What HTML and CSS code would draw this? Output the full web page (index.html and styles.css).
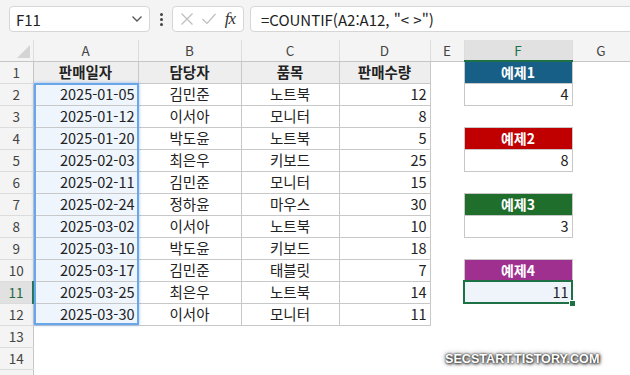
FILE: index.html
```html
<!DOCTYPE html>
<html lang="ko">
<head>
    <meta charset="UTF-8">
    <title>COUNTIF 예제</title>
    <link rel="stylesheet" href="styles.css">
</head>
<body>

    <div class="topbar">
        <div class="namebox">
            <span>F11</span>
            <svg width="12" height="8" viewBox="0 0 12 8"><path d="M1.5 1.5 L6 6 L10.5 1.5" fill="none" stroke="#555" stroke-width="1.3"/></svg>
        </div>
        <div class="dots"><i></i><i></i><i></i></div>
        <div class="fxbox">
            <svg width="14" height="14" viewBox="0 0 14 14"><path d="M1.5 1.5 L12.5 12.5 M12.5 1.5 L1.5 12.5" stroke="#bdbdbd" stroke-width="1.2"/></svg>
            <svg width="16" height="14" viewBox="0 0 16 14"><path d="M1.5 7 L6 11.5 L14.5 2" fill="none" stroke="#bdbdbd" stroke-width="1.2"/></svg>
            <span class="fx">fx</span>
        </div>
        <div class="formula">=COUNTIF(A2:A12, "&lt; &gt;")</div>
    </div>

    <div class="sheet">
        <table class="grid">
            <colgroup>
                <col style="width:33px"><col style="width:105px"><col style="width:103px"><col style="width:98px">
                <col style="width:91px"><col style="width:34px"><col style="width:108px"><col style="width:58px">
            </colgroup>
            <tr class="colrow">
                <th class="corner"><span class="tri"></span></th>
                <th>A</th><th>B</th><th>C</th><th>D</th><th>E</th><th class="on">F</th><th>G</th>
            </tr>
            <tr>
                <th class="rh">1</th>
                <td class="b head">판매일자</td><td class="b head">담당자</td><td class="b head">품목</td><td class="b head">판매수량</td>
                <td></td><td class="ex blue">예제1</td><td></td>
            </tr>
            <tr>
                <th class="rh">2</th>
                <td class="b r sel">2025-01-05</td><td class="b c">김민준</td><td class="b c">노트북</td><td class="b r">12</td>
                <td></td><td class="b r">4</td><td></td>
            </tr>
            <tr>
                <th class="rh">3</th>
                <td class="b r sel">2025-01-12</td><td class="b c">이서아</td><td class="b c">모니터</td><td class="b r">8</td>
                <td></td><td></td><td></td>
            </tr>
            <tr>
                <th class="rh">4</th>
                <td class="b r sel">2025-01-20</td><td class="b c">박도윤</td><td class="b c">노트북</td><td class="b r">5</td>
                <td></td><td class="ex red">예제2</td><td></td>
            </tr>
            <tr>
                <th class="rh">5</th>
                <td class="b r sel">2025-02-03</td><td class="b c">최은우</td><td class="b c">키보드</td><td class="b r">25</td>
                <td></td><td class="b r">8</td><td></td>
            </tr>
            <tr>
                <th class="rh">6</th>
                <td class="b r sel">2025-02-11</td><td class="b c">김민준</td><td class="b c">모니터</td><td class="b r">15</td>
                <td></td><td></td><td></td>
            </tr>
            <tr>
                <th class="rh">7</th>
                <td class="b r sel">2025-02-24</td><td class="b c">정하윤</td><td class="b c">마우스</td><td class="b r">30</td>
                <td></td><td class="ex green">예제3</td><td></td>
            </tr>
            <tr>
                <th class="rh">8</th>
                <td class="b r sel">2025-03-02</td><td class="b c">이서아</td><td class="b c">노트북</td><td class="b r">10</td>
                <td></td><td class="b r">3</td><td></td>
            </tr>
            <tr>
                <th class="rh">9</th>
                <td class="b r sel">2025-03-10</td><td class="b c">박도윤</td><td class="b c">키보드</td><td class="b r">18</td>
                <td></td><td></td><td></td>
            </tr>
            <tr>
                <th class="rh">10</th>
                <td class="b r sel">2025-03-17</td><td class="b c">김민준</td><td class="b c">태블릿</td><td class="b r">7</td>
                <td></td><td class="ex purple">예제4</td><td></td>
            </tr>
            <tr>
                <th class="rh on">11</th>
                <td class="b r sel">2025-03-25</td><td class="b c">최은우</td><td class="b c">노트북</td><td class="b r">14</td>
                <td></td><td class="b r act">11</td><td></td>
            </tr>
            <tr>
                <th class="rh">12</th>
                <td class="b r sel">2025-03-30</td><td class="b c">이서아</td><td class="b c">모니터</td><td class="b r">11</td>
                <td></td><td></td><td></td>
            </tr>
            <tr><th class="rh">13</th><td></td><td></td><td></td><td></td><td></td><td></td><td></td></tr>
            <tr><th class="rh">14</th><td></td><td></td><td></td><td></td><td></td><td></td><td></td></tr>
            <tr><th class="rh"></th><td></td><td></td><td></td><td></td><td></td><td></td><td></td></tr>
        </table>

        <div class="range"></div>
        <div class="active"><span class="handle"></span></div>
        <div class="watermark">SECSTART.TISTORY.COM</div>
    </div>

</body>
</html>
```

FILE: styles.css
```css
body {
    margin: 0;
    width: 630px;
    height: 375px;
    overflow: hidden;
    background: #fff;
    font-family: "Noto Sans CJK KR", "Noto Sans", sans-serif;
    color: #222;
}
.topbar {
    height: 40px;
    background: #f4f4f4;
    display: flex;
    align-items: flex-start;
    padding: 6px 0 0 9px;
    box-sizing: border-box;
    overflow: hidden;
}
.namebox, .fxbox, .formula {
    height: 26px;
    box-sizing: border-box;
    background: #fff;
    border: 1px solid #d6d6d6;
    border-radius: 4px;
    display: flex;
    align-items: center;
}
.namebox {
    width: 141px;
    padding: 0 6px 0 6px;
    justify-content: space-between;
    font-size: 15px;
}
.dots {
    width: 22px;
    height: 26px;
    display: flex;
    flex-direction: column;
    align-items: center;
    justify-content: center;
    gap: 2px;
}
.dots i {
    width: 3px;
    height: 3px;
    border-radius: 50%;
    background: #444;
}
.fxbox {
    width: 72px;
    padding: 0 6px 0 7px;
    justify-content: space-between;
}
.fx {
    font-family: "Liberation Serif", serif;
    font-style: italic;
    font-size: 17px;
    color: #333;
    letter-spacing: -1px;
    padding-right: 2px;
}
.formula {
    flex: 1;
    margin-left: 6px;
    margin-right: -8px;
    padding-left: 10px;
    font-size: 15px;
    color: #222;
    white-space: nowrap;
}
.sheet {
    position: relative;
}
.grid {
    border-collapse: collapse;
    table-layout: fixed;
    width: 630px;
    font-size: 14.5px;
}
.grid td, .grid th {
    padding: 0 3px;
    height: 22px;
    box-sizing: border-box;
    white-space: nowrap;
    overflow: hidden;
    line-height: 20px;
}
.colrow th {
    height: 21px;
    background: #f4f4f4;
    font-weight: normal;
    font-size: 13.5px;
    color: #444;
    border-right: 1px solid #dcdcdc;
    border-bottom: 1px solid #c6c6c6;
}
.colrow th.on {
    background: #e1e1e1;
    color: #1e7145;
    border-bottom: 2px solid #1e7145;
}
.corner {
    position: relative;
}
.tri {
    position: absolute;
    right: 3px;
    bottom: 3px;
    width: 0;
    height: 0;
    border-left: 13px solid transparent;
    border-bottom: 13px solid #d4d4d4;
}
.rh {
    background: #f4f4f4;
    font-weight: normal;
    font-size: 13.5px;
    color: #444;
    text-align: center;
    border-right: 1px solid #c6c6c6;
    border-bottom: 1px solid #dcdcdc;
}
.rh.on {
    background: #e1e1e1;
    color: #1e6b42;
    border-right: 2px solid #1e7145;
}
.b {
    border: 1px solid #c8c8c8;
}
.head {
    background: #eeeeee;
    font-weight: bold;
    text-align: center;
}
.r { text-align: right; }
.c { text-align: center; }
.sel { background: #eef5fd; }
.act { background: #eef4fa; }
.ex {
    border: 1px solid #c8c8c8;
    color: #fff;
    font-weight: bold;
    text-align: center;
    font-size: 14px;
}
.blue { background: #185f87; }
.red { background: #c00000; }
.green { background: #1f6e2b; }
.purple { background: #a0308f; }
.range {
    position: absolute;
    left: 34px;
    top: 43px;
    width: 105px;
    height: 242px;
    box-sizing: border-box;
    border: 2px solid #6aa6ea;
    box-shadow: 0 0 3px rgba(90, 150, 230, 0.6);
}
.active {
    position: absolute;
    left: 463px;
    top: 240px;
    width: 110px;
    height: 24px;
    box-sizing: border-box;
    border: 2px solid #1e7145;
}
.handle {
    position: absolute;
    right: -5px;
    bottom: -5px;
    width: 5px;
    height: 5px;
    background: #1e7145;
    border: 1px solid #fff;
}
.watermark {
    position: absolute;
    left: 445px;
    top: 312px;
    font-family: "Liberation Sans", Arial, sans-serif;
    font-weight: bold;
    font-size: 12.6px;
    color: #fff;
    text-shadow: 0 0 2px #222, 1px 1px 3px #333, 0 0 5px #555;
}
```
